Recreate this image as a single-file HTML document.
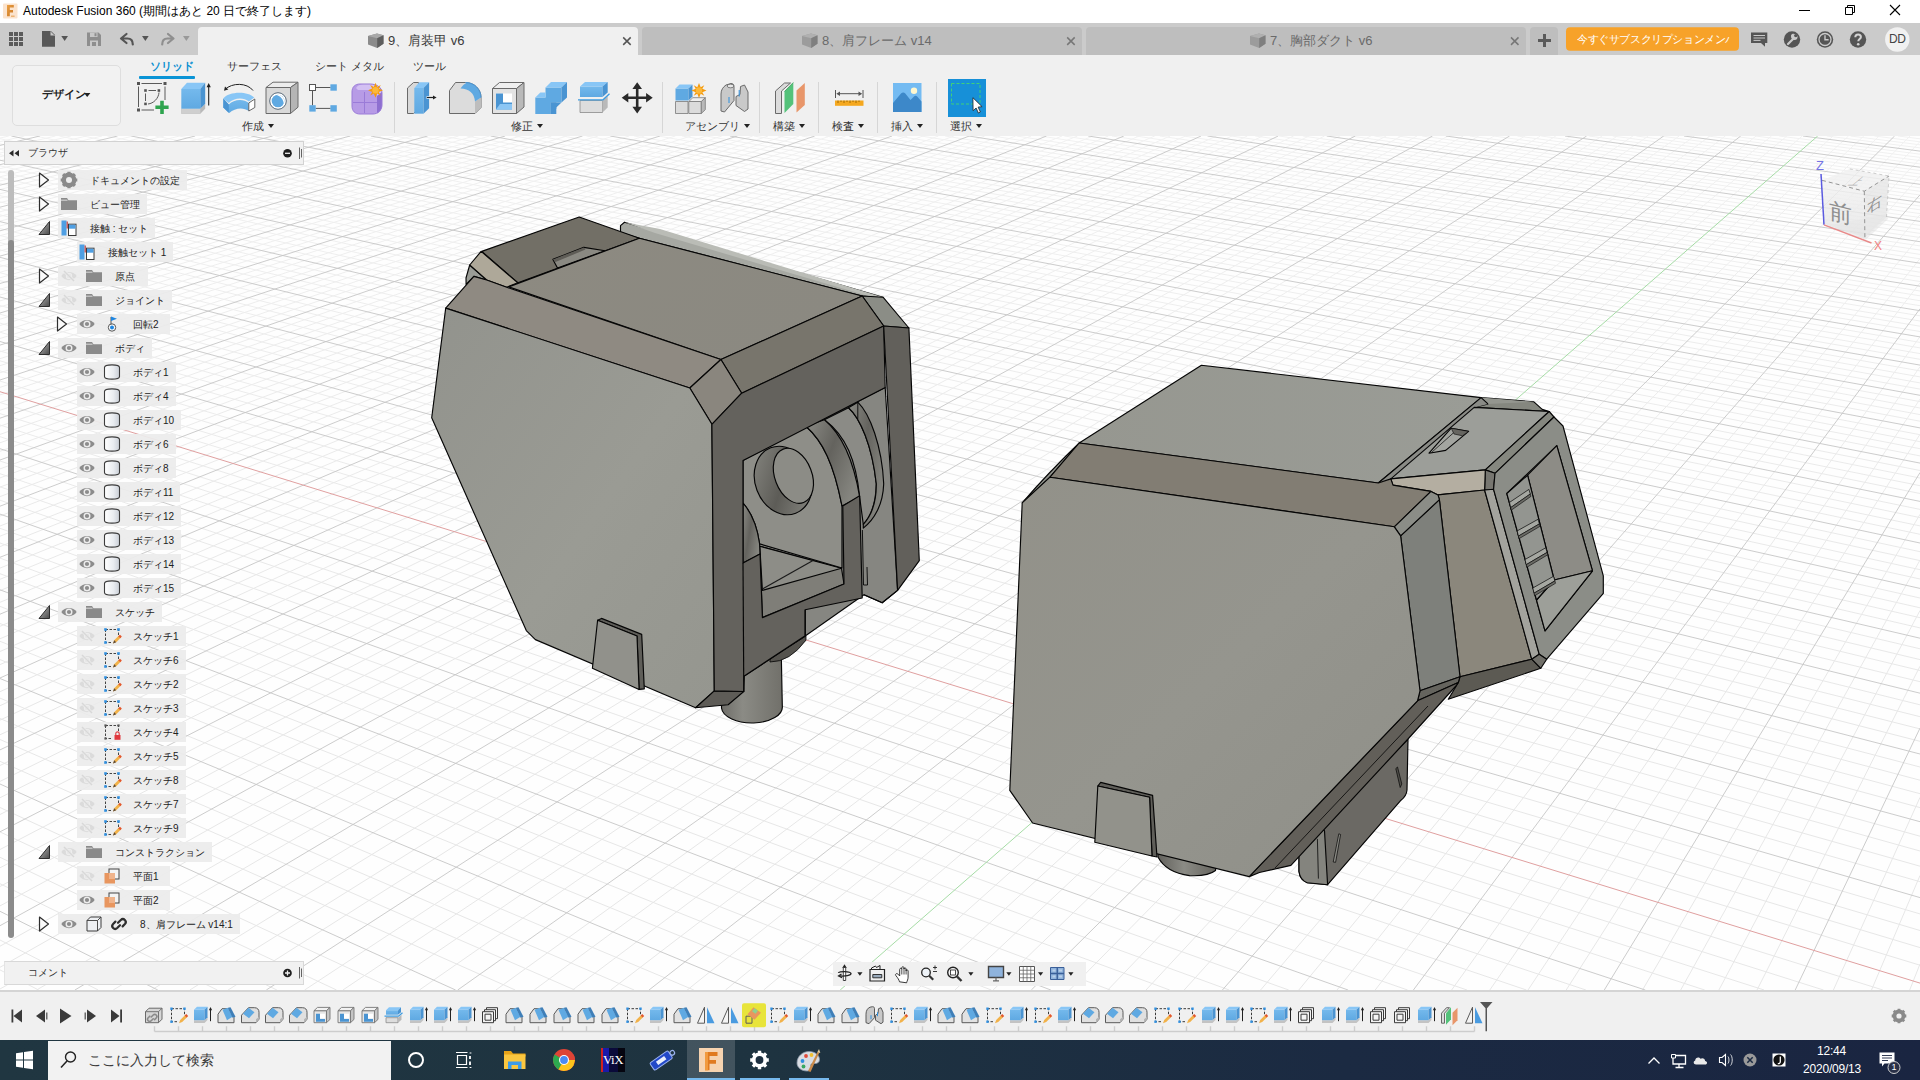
<!DOCTYPE html>
<html lang="ja"><head><meta charset="utf-8"><title>Autodesk Fusion 360</title>
<style>
*{box-sizing:border-box;margin:0;padding:0}
html,body{width:1920px;height:1080px;overflow:hidden;background:#fff;font-family:"Liberation Sans",sans-serif;color:#222}
.abs{position:absolute}
#app{position:relative;width:1920px;height:1080px;overflow:hidden}
#titlebar{left:0;top:0;width:1920px;height:23px;background:#fff}
#tabbar{left:0;top:23px;width:1920px;height:32px;background:#cbcbcb}
#toolbar{left:0;top:55px;width:1920px;height:81px;background:#f0f0f0}
#canvas{left:0;top:0;width:1920px;height:1080px}
#timeline{left:0;top:990px;width:1920px;height:50px;background:#f0f0f0;border-top:2px solid #d4d4d4}
#taskbar{left:0;top:1040px;width:1920px;height:40px;background:linear-gradient(90deg,#203641 0%,#1e3340 40%,#1b2a42 70%,#1a2541 100%)}
.t{position:absolute;white-space:nowrap;line-height:1}
</style></head><body><div id="app">
<svg id="canvas" class="abs" width="1920" height="1080" viewBox="0 0 1920 1080">
<rect x="0" y="136" width="1920" height="854" fill="#fefefe"/>
<g shape-rendering="auto"><defs><linearGradient id="gfade" x1="0" y1="136" x2="0" y2="990" gradientUnits="userSpaceOnUse"><stop offset="0" stop-color="#fff" stop-opacity=".42"/><stop offset=".2" stop-color="#fff" stop-opacity=".28"/><stop offset=".45" stop-color="#fff" stop-opacity=".1"/><stop offset=".75" stop-color="#fff" stop-opacity="0"/></linearGradient></defs><path d="M0.0 138.1L8.8 136.0M0.0 141.7L24.3 136.0M0.0 149.2L55.4 136.0M0.0 153.0L70.9 136.0M0.0 156.8L86.4 136.0M0.0 160.7L102.0 136.0M0.0 168.7L133.0 136.0M0.0 172.7L148.5 136.0M0.0 176.8L164.0 136.0M0.0 181.0L179.5 136.0M0.0 189.5L210.6 136.0M0.0 193.8L226.1 136.0M0.0 198.2L241.6 136.0M0.0 202.7L257.1 136.0M0.0 211.8L288.1 136.0M0.0 216.4L303.6 136.0M0.0 221.1L319.1 136.0M0.0 225.9L334.6 136.0M0.0 235.7L365.6 136.0M0.0 240.7L381.1 136.0M0.0 245.8L396.6 136.0M0.0 250.9L412.1 136.0M0.0 261.4L443.1 136.0M0.0 266.8L458.6 136.0M0.0 272.3L474.1 136.0M0.0 277.8L489.6 136.0M0.0 289.2L520.6 136.0M0.0 295.0L536.1 136.0M0.0 300.9L551.5 136.0M0.0 306.9L567.0 136.0M0.0 319.2L598.0 136.0M0.0 325.5L613.5 136.0M0.0 332.0L629.0 136.0M0.0 338.5L644.4 136.0M0.0 351.8L675.4 136.0M0.0 358.7L690.9 136.0M0.0 365.7L706.4 136.0M0.0 372.8L721.8 136.0M0.0 387.4L752.8 136.0M0.0 394.9L768.2 136.0M0.0 402.5L783.7 136.0M0.0 410.3L799.2 136.0M0.0 426.2L830.1 136.0M0.0 434.4L845.6 136.0M0.0 442.8L861.0 136.0M0.0 451.3L876.5 136.0M0.0 468.9L907.4 136.0M0.0 477.9L922.9 136.0M0.0 487.1L938.4 136.0M0.0 496.6L953.8 136.0M0.0 516.0L984.7 136.0M0.0 526.0L1000.2 136.0M0.0 536.2L1015.6 136.0M0.0 546.6L1031.1 136.0M0.0 568.1L1062.0 136.0M0.0 579.3L1077.4 136.0M0.0 590.6L1092.9 136.0M0.0 602.3L1108.3 136.0M0.0 626.3L1139.2 136.0M0.0 638.8L1154.7 136.0M0.0 651.5L1170.1 136.0M0.0 664.6L1185.5 136.0M0.0 691.7L1216.4 136.0M0.0 705.7L1231.9 136.0M0.0 720.1L1247.3 136.0M0.0 734.8L1262.7 136.0M0.0 765.5L1293.6 136.0M0.0 781.4L1309.0 136.0M0.0 797.7L1324.5 136.0M0.0 814.5L1339.9 136.0M0.0 849.5L1370.8 136.0M0.0 867.8L1386.2 136.0M0.0 886.5L1401.6 136.0M0.0 905.9L1417.0 136.0M0.0 946.2L1447.9 136.0M0.0 967.3L1463.3 136.0M0.0 989.0L1478.7 136.0M36.6 990.0L1494.1 136.0M113.2 990.0L1525.0 136.0M151.5 990.0L1540.4 136.0M189.8 990.0L1555.8 136.0M228.1 990.0L1571.2 136.0M304.6 990.0L1602.0 136.0M342.9 990.0L1617.4 136.0M381.2 990.0L1632.9 136.0M419.4 990.0L1648.3 136.0M495.9 990.0L1679.1 136.0M534.2 990.0L1694.5 136.0M572.5 990.0L1709.9 136.0M610.7 990.0L1725.3 136.0M687.2 990.0L1756.1 136.0M725.5 990.0L1771.5 136.0M763.7 990.0L1786.9 136.0M801.9 990.0L1802.3 136.0M878.4 990.0L1833.1 136.0M916.6 990.0L1848.5 136.0M954.9 990.0L1863.8 136.0M993.1 990.0L1879.2 136.0M1069.5 990.0L1910.0 136.0M1107.8 990.0L1920.0 141.6M1146.0 990.0L1920.0 158.3M1184.2 990.0L1920.0 176.0M1260.6 990.0L1920.0 214.7M1298.8 990.0L1920.0 235.9M1337.0 990.0L1920.0 258.6M1375.2 990.0L1920.0 282.8M1451.6 990.0L1920.0 336.6M1489.8 990.0L1920.0 366.7M1528.0 990.0L1920.0 399.1M1566.2 990.0L1920.0 434.3M1642.5 990.0L1920.0 514.3M1680.7 990.0L1920.0 560.1M1718.9 990.0L1920.0 610.5M1757.0 990.0L1920.0 666.2M1833.4 990.0L1920.0 797.4M1871.5 990.0L1920.0 875.5M1909.7 990.0L1920.0 964.0M0.0 969.9L38.6 990.0M0.0 940.0L98.2 990.0M0.0 883.7L217.3 990.0M0.0 857.3L276.9 990.0M0.0 831.9L336.5 990.0M0.0 807.5L396.0 990.0M0.0 761.3L515.2 990.0M0.0 739.5L574.7 990.0M0.0 718.5L634.2 990.0M-0.0 698.1L693.8 990.0M0.0 659.6L812.8 990.0M0.0 641.3L872.3 990.0M0.0 623.5L931.8 990.0M0.0 606.4L991.3 990.0M0.0 573.7L1110.3 990.0M0.0 558.1L1169.7 990.0M0.0 543.0L1229.2 990.0M0.0 528.3L1288.7 990.0M0.0 500.2L1407.6 990.0M0.0 486.8L1467.0 990.0M0.0 473.7L1526.4 990.0M0.0 461.0L1585.9 990.0M0.0 436.7L1704.7 990.0M0.0 425.0L1764.1 990.0M0.0 413.6L1823.5 990.0M0.0 402.5L1882.9 990.0M0.0 381.1L1920.0 965.2M0.0 370.8L1920.0 947.6M0.0 360.8L1920.0 930.5M0.0 351.0L1920.0 913.9M0.0 332.2L1920.0 881.7M0.0 323.1L1920.0 866.2M-0.0 314.2L1920.0 851.0M0.0 305.5L1920.0 836.2M0.0 288.7L1920.0 807.6M0.0 280.6L1920.0 793.7M0.0 272.7L1920.0 780.2M0.0 264.9L1920.0 767.0M0.0 249.9L1920.0 741.3M0.0 242.6L1920.0 728.9M0.0 235.5L1920.0 716.7M0.0 228.5L1920.0 704.8M0.0 214.9L1920.0 681.7M0.0 208.4L1920.0 670.5M0.0 201.9L1920.0 659.6M0.0 195.6L1920.0 648.8M0.0 183.4L1920.0 627.9M0.0 177.4L1920.0 617.7M-0.0 171.6L1920.0 607.8M0.0 165.8L1920.0 598.0M0.0 154.7L1920.0 579.0M0.0 149.3L1920.0 569.7M0.0 143.9L1920.0 560.6M0.0 138.7L1920.0 551.7M35.4 136.0L1920.0 534.3M59.4 136.0L1920.0 525.9M83.4 136.0L1920.0 517.6M107.3 136.0L1920.0 509.4M155.3 136.0L1920.0 493.5M179.3 136.0L1920.0 485.7M203.2 136.0L1920.0 478.0M227.2 136.0L1920.0 470.5M275.1 136.0L1920.0 455.9M299.1 136.0L1920.0 448.7M323.0 136.0L1920.0 441.7M347.0 136.0L1920.0 434.7M394.9 136.0L1920.0 421.2M418.8 136.0L1920.0 414.6M442.8 136.0L1920.0 408.0M466.7 136.0L1920.0 401.6M514.6 136.0L1920.0 389.1M538.5 136.0L1920.0 382.9M562.4 136.0L1920.0 376.9M586.4 136.0L1920.0 370.9M634.2 136.0L1920.0 359.3M658.1 136.0L1920.0 353.6M682.0 136.0L1920.0 347.9M705.9 136.0L1920.0 342.4M753.8 136.0L1920.0 331.5M777.7 136.0L1920.0 326.2M801.6 136.0L1920.0 321.0M825.5 136.0L1920.0 315.8M873.3 136.0L1920.0 305.7M897.1 136.0L1920.0 300.7M921.0 136.0L1920.0 295.8M944.9 136.0L1920.0 291.0M992.7 136.0L1920.0 281.5M1016.6 136.0L1920.0 276.8M1040.4 136.0L1920.0 272.2M1064.3 136.0L1920.0 267.7M1112.0 136.0L1920.0 258.8M1135.9 136.0L1920.0 254.4M1159.8 136.0L1920.0 250.1M1183.6 136.0L1920.0 245.9M1231.3 136.0L1920.0 237.5M1255.2 136.0L1920.0 233.4M1279.0 136.0L1920.0 229.4M1302.9 136.0L1920.0 225.4M1350.6 136.0L1920.0 217.5M1374.4 136.0L1920.0 213.6M1398.2 136.0L1920.0 209.8M1422.1 136.0L1920.0 206.0M1469.7 136.0L1920.0 198.6M1493.5 136.0L1920.0 195.0M1517.4 136.0L1920.0 191.3M1541.2 136.0L1920.0 187.8M1588.8 136.0L1920.0 180.8M1612.6 136.0L1920.0 177.3M1636.4 136.0L1920.0 173.9M1660.2 136.0L1920.0 170.5M1707.8 136.0L1920.0 163.9M1731.6 136.0L1920.0 160.6M1755.4 136.0L1920.0 157.4M1779.2 136.0L1920.0 154.2M1826.8 136.0L1920.0 147.9M1850.6 136.0L1920.0 144.8M1874.4 136.0L1920.0 141.8M1898.1 136.0L1920.0 138.8" stroke="#e7e7e7" stroke-width="1" fill="none"/><rect x="0" y="136" width="1920" height="854" fill="url(#gfade)"/><path d="M0.0 145.4L39.9 136.0M0.0 164.7L117.5 136.0M0.0 185.2L195.1 136.0M0.0 207.2L272.6 136.0M0.0 230.8L350.1 136.0M0.0 256.1L427.6 136.0M0.0 283.5L505.1 136.0M0.0 313.0L582.5 136.0M0.0 345.1L659.9 136.0M0.0 380.0L737.3 136.0M0.0 418.2L814.7 136.0M0.0 460.0L892.0 136.0M0.0 506.2L969.3 136.0M0.0 557.3L1046.5 136.0M0.0 614.2L1123.8 136.0M0.0 678.0L1201.0 136.0M0.0 749.9L1278.2 136.0M0.0 831.8L1355.3 136.0M0.0 925.7L1432.5 136.0M74.9 990.0L1509.6 136.0M266.3 990.0L1586.6 136.0M457.7 990.0L1663.7 136.0M649.0 990.0L1740.7 136.0M1031.3 990.0L1894.6 136.0M1222.4 990.0L1920.0 194.8M1413.4 990.0L1920.0 308.8M1604.3 990.0L1920.0 472.6M1795.2 990.0L1920.0 728.1M0.0 911.3L157.8 990.0M0.0 784.0L455.6 990.0M0.0 678.5L753.3 990.0M0.0 589.8L1050.8 990.0M0.0 514.1L1348.1 990.0M0.0 448.7L1645.3 990.0M-0.0 341.5L1920.0 897.6M0.0 297.0L1920.0 821.7M0.0 257.3L1920.0 754.0M0.0 221.6L1920.0 693.2M0.0 189.4L1920.0 638.2M0.0 160.2L1920.0 588.4M11.4 136.0L1920.0 543.0M131.3 136.0L1920.0 501.4M251.2 136.0L1920.0 463.1M370.9 136.0L1920.0 427.9M490.6 136.0L1920.0 395.3M610.3 136.0L1920.0 365.1M729.9 136.0L1920.0 336.9M849.4 136.0L1920.0 310.7M968.8 136.0L1920.0 286.2M1088.2 136.0L1920.0 263.2M1207.5 136.0L1920.0 241.7M1326.7 136.0L1920.0 221.4M1445.9 136.0L1920.0 202.3M1565.0 136.0L1920.0 184.3M1684.0 136.0L1920.0 167.2M1803.0 136.0L1920.0 151.1" stroke="#c6c6c6" stroke-width=".9" fill="none"/><path d="M0.0 391.7L1920.0 983.1" stroke="#e0a0a0" stroke-width="1" fill="none"/><path d="M840.2 990.0L1817.7 136.0" stroke="#a6dca6" stroke-width="1" fill="none"/></g>
<defs>
<linearGradient id="gFrontL" x1="0" y1="0" x2="1" y2="1"><stop offset="0" stop-color="#92938d"/><stop offset="0.55" stop-color="#9a9b94"/><stop offset="1" stop-color="#95968f"/></linearGradient>
<linearGradient id="gTopL" x1="0" y1="0" x2="1" y2="0.4"><stop offset="0" stop-color="#8d8a81"/><stop offset="1" stop-color="#8b8981"/></linearGradient>
<linearGradient id="gPin" x1="0" y1="0" x2="1" y2="0"><stop offset="0" stop-color="#62615c"/><stop offset="0.45" stop-color="#8b8b85"/><stop offset="1" stop-color="#66655f"/></linearGradient>
<linearGradient id="gPinL" x1="0" y1="0" x2="1" y2="0"><stop offset="0" stop-color="#6f6e69"/><stop offset="0.35" stop-color="#8b8b85"/><stop offset="1" stop-color="#71706a"/></linearGradient><linearGradient id="gRing" x1="0" y1="0" x2="1" y2="1"><stop offset="0" stop-color="#8a8a84"/><stop offset="0.5" stop-color="#5d5c57"/><stop offset="1" stop-color="#8c8c86"/></linearGradient>
<linearGradient id="gArch" x1="0" y1="0" x2="1" y2="0.6"><stop offset="0" stop-color="#8b8b85"/><stop offset="0.5" stop-color="#64635e"/><stop offset="1" stop-color="#85857f"/></linearGradient>
<linearGradient id="gFrontR" x1="0" y1="0" x2="1" y2="1"><stop offset="0" stop-color="#929189"/><stop offset="0.5" stop-color="#95958e"/><stop offset="1" stop-color="#8f8f88"/></linearGradient>
<linearGradient id="gTopR" x1="0" y1="0" x2="1" y2="0"><stop offset="0" stop-color="#969790"/><stop offset="1" stop-color="#9a9c96"/></linearGradient>
</defs>
<g id="modelL" stroke="#050505" stroke-width="1.15" stroke-linejoin="round">
<!-- pin -->
<path d="M721.500 650 L721.500 708 A30.400 16 0 0 0 782.300 706 L781 640 Z" fill="url(#gPinL)"/><path d="M770 662 Q790 662 806 640 L806 636 L770 658 Z" fill="#55534e" stroke-width=".8"/>
<!-- back plate -->
<path d="M620.5 232.5 L620.5 225.6 L624.5 222.2 L883 297.2 L862.2 296 L639.4 238.2 Z" fill="#a6a8a2"/>
<path d="M624.5 222.2 L660 229 L883 297.2 L870 296.6 L655 233 Z" fill="#babcb6" stroke="none"/>
<!-- interior back wall -->
<path d="M743 460.6 L885.2 387.4 L897.6 590.4 L882.2 602.8 L863.9 594.8 L805.2 636 L744.3 676 Z" fill="#868681"/>
<!-- recess -->
<path d="M579.2 217 L481.8 251.4 L517.9 282.9 L639.4 238.2 Z" fill="#726f66"/>
<!-- slot in recess -->
<path d="M552.9 259.4 L583.8 247.4 L605 250.8 L557.5 268 Z" fill="#8a8982"/>
<path d="M552.9 259.4 L583.8 247.4 L585.5 249.5 L555.5 262 Z" fill="#5e5c56" stroke="none"/>
<!-- light facet + sliver -->
<path d="M469.7 265 L486.7 280 L473.9 276.4 L466.1 284.4 L466 278 Z" fill="#9a9c96"/>
<path d="M481.1 251.4 L517.8 282.8 L506.7 287.2 L486.7 280 L469.7 265 Z" fill="#aea899"/>
<!-- top face -->
<path d="M508.7 286.9 L639.4 238.2 L862.2 296 L720.9 359.5 Z" fill="url(#gTopL)"/>
<!-- top-right small facet -->
<path d="M862.2 296 L883 297.2 L908.9 328 L883.7 326 Z" fill="#8b8d86"/>
<!-- chamfer top-right -->
<path d="M720.9 359.5 L862.2 296 L883.7 326 L741.7 393.2 Z" fill="#78756c"/>
<!-- long chamfer strip -->
<path d="M445.7 308.1 L473.9 276.4 L486.7 280 L506.7 287.2 L720.9 359.5 L689.8 388 Z" fill="#8f8a82"/>
<!-- corner chamfer -->
<path d="M689.8 388 L720.9 359.5 L741.7 393.2 L711.9 424.3 Z" fill="#8a867e"/>
<!-- front face -->
<path d="M445.7 308.1 L689.8 388 L711.9 424.3 L714.3 690.9 L695.6 707.7 L535.4 639.6 L526.3 630.6 L431.7 417.8 Z" fill="url(#gFrontL)"/>
<!-- bottom chamfer of frame -->
<path d="M714.3 690.9 L743.8 691.5 L728.1 704.7 L695.6 707.7 Z" fill="#5e5c57"/>
<!-- U floor -->
<path d="M759.8 546.3 L841.5 568.3 L844 584 L762.4 617.6 Z" fill="#7f7e78"/>
<path d="M759.8 546.3 L841.5 568.3 L762.4 590.4 Z" fill="#8d8d87"/>
<path d="M762.4 589 L813 560.6" fill="none" stroke="#1a1a1a"/>
<!-- rear disc face -->
<path d="M824.4 419.8 L848.5 407.8 C860 418 872 445 876.3 483.7 C876 502 871 516 863.3 524.4 L859.6 496.7 C856 460 846 436 824.4 419.8 Z" fill="#8b8b86"/>
<!-- crescent -->
<path d="M848.5 407.8 L857.8 402.2 C870 414 882 446 883.7 483.7 C883 505 874 520 863.3 528.1 L863.3 524.4 C871 516 876.5 502 876.3 483.7 C872 445 860 418 848.5 407.8 Z" fill="url(#gArch)"/>
<path d="M857.8 400.4 L857.8 418.9 M862.4 530 L863.5 585 L867.5 585 L867 567" fill="none" stroke-width=".9"/>
<!-- clevis plate -->
<path d="M743 460.6 L805.9 426.3 C822.6 441.1 833.7 463.3 842 505.9 L842 568 L759.6 543.9 C757 525 751 512 743 503.1 Z" fill="#8e8e88"/>
<!-- band -->
<path d="M805.9 426.3 L824.4 419.8 C841.1 433.7 853.1 457.8 859.6 496.7 L842 505.9 C833.7 463.3 822.6 441.1 805.9 426.3 Z" fill="url(#gArch)"/>
<!-- ring -->
<ellipse cx="783.2" cy="480.5" rx="28" ry="35" transform="rotate(-21 783.2 480.5)" fill="url(#gRing)"/>
<ellipse cx="793.4" cy="475.8" rx="18.5" ry="28.6" transform="rotate(-21 793.4 475.8)" fill="#8c8c86"/>
<!-- left arch curved piece -->
<path d="M743 503.1 C751 512 757 525 759.6 543.9 L760 554 L743 563 Z" fill="url(#gArch)"/>
<!-- dark frame + U bracket front -->
<path d="M711.9 424.3 L741.7 393.2 L883.7 326 L885.2 387.4 L743 460.6 L743 563 L760 554 L762.4 617.6 L844 584 L842.8 506 L859.6 495.7 L862.2 598 L805.2 609.8 L805.2 635.7 L744.3 676 L743.8 691.5 L714.3 690.9 Z" fill="#64625d"/><path d="M743 563 L743.8 691.5" fill="none"/>
<path d="M805.2 609.8 L805.2 635.7" fill="none"/>
<!-- right plate -->
<path d="M883.7 326 L908.9 328 L919.3 560.7 L897.6 590.4 Z" fill="#62605b"/>
<path d="M897.6 590.4 L882.2 602.8 L863.9 594.8" fill="none"/>
<!-- tab -->
<path d="M597.6 620.2 L601.5 618.4 L641.7 634.4 L644.3 688.9 L639.1 689.4 L637 636 Z" fill="#5f5e59"/>
<path d="M597.6 620.2 L637 636 L639.1 689.4 L592.4 668.2 Z" fill="#91918b"/>
</g>
<g id="modelR" stroke="#050505" stroke-width="1.15" stroke-linejoin="round">
<!-- lower bracket behind -->
<path d="M1408 739 L1407 790 Q1406.5 796 1401 800.2 L1327.6 884.7 L1307.2 882.7 Q1300 880 1299 871.5 L1299 850 Z" fill="#6b6964"/>
<path d="M1299 850 L1299 871.5 Q1300 880 1307.2 882.7 L1327.6 884.7 L1324.5 830.7 L1318 826 Z" fill="#84847e"/>
<path d="M1317.4 838.9 L1318.4 878.6" fill="none" stroke-width="0.8"/>
<path d="M1395.8 768.6 L1400.2 787.5 L1401.8 784 L1397.5 767 Z" fill="#504f4a" stroke-width="0.7"/>
<path d="M1338.8 833.8 L1333.2 862 L1335.6 862.3 L1340.6 834.5 Z" fill="#8a8a84" stroke-width="0.7"/>
<!-- bottom cylinder -->
<path d="M1158 852 L1216 866 L1215.500 870.500 Q1208 876.500 1189.600 875.600 Q1166 872.500 1158 857 Z" fill="url(#gPin)"/>
<!-- left sliver -->
<path d="M1079.2 443 L1050 477.2 L1022.2 502.8 Q1048.5 472.5 1079.2 443 Z" fill="#8f918b"/>
<!-- back small piece -->
<path d="M1481.1 397.6 L1533.9 401.8 L1542.2 409.4 L1549.2 411.5 L1474.2 407.4 L1488 403.9 Z" fill="#85877f"/>
<path d="M1488 403.9 L1533.9 401.8 L1481.1 397.6 Z" fill="#94968f" stroke="none"/>
<!-- top face -->
<path d="M1201.4 365.3 L1481.1 397.6 L1378.3 483 L1079.2 443 Z" fill="url(#gTopR)"/>
<!-- step side -->
<path d="M1481.1 397.6 L1488 403.9 L1474.2 407.4 L1390.8 478.9 L1378.3 483 Z" fill="#8a8b86" stroke="none"/><path d="M1378.3 483 L1481.1 397.6 L1488 403.9" fill="none"/>
<!-- lower deck -->
<path d="M1474.2 407.4 L1549.2 411.5 L1485.3 469.9 L1390.8 478.9 Z" fill="#9c9e99"/>
<!-- slot -->
<path d="M1451.2 428.2 L1468.6 431.4 L1445.7 450.4 L1429 453.2 Z" fill="#a3a5a0"/>
<path d="M1451.2 428.2 L1468.6 431.4 L1462.4 435.8 L1454 434 Z" fill="#666560" stroke-width="0.6"/>
<path d="M1453.3 433 L1431.5 452.5" fill="none" stroke-width="0.7"/>
<!-- frame chamfer -->
<path d="M1549.2 411.5 L1554 417 L1495 473.3 L1485.3 469.9 Z" fill="#85877f"/>
<!-- small dark facet -->
<path d="M1485.3 469.9 L1495 473.3 L1493.6 489.3 L1484.6 490 Z" fill="#777670"/>
<!-- beige facet -->
<path d="M1390.8 478.9 L1485.3 469.9 L1484.6 490 L1438 494.9 L1431 491.4 L1393 485.1 Z" fill="#b4aea1"/>
<!-- chamfer strip -->
<path d="M1050 477.2 L1079.2 443 L1378.3 483 L1390.8 478.9 L1393 485.1 L1431 491.4 L1394.3 526.8 Z" fill="#827d73"/>
<!-- duct side face (brownish) -->
<path d="M1438 494.9 L1484.6 490 L1531.7 659.2 L1460 676.7 L1439.4 499.7 Z" fill="#8b877c"/>
<!-- light strip -->
<path d="M1484.6 490 L1493.6 489.3 L1539.2 654.2 L1531.7 659.2 Z" fill="#a3a39d"/>
<!-- duct frame -->
<path d="M1495 473.3 L1554 417 L1563 426 L1603.3 575.8 L1603.3 593.3 L1546.7 659.2 L1539.2 654.2 L1493.6 489.3 Z" fill="#8b8d87"/>
<!-- duct interior -->
<path d="M1506.8 493.5 L1556.8 445.6 L1592.5 570.8 L1545 630.8 Z" fill="#8c8b85"/>
<path d="M1527.6 475.2 L1556.8 445.6 L1592.5 570.8 L1554.2 580 Z" fill="#8d8c86"/>
<path d="M1554.2 580 L1592.5 570.8 L1545 630.8 L1536.5 600 Z" fill="#9d9f99"/>
<path d="M1506.8 493.5 L1527.6 475.2 L1554.2 580 L1536.5 600 Z" fill="#939590"/>
<path d="M1509.5 502.4 L1528.9 489.4 L1530.3000000000002 494.0 L1510.7 507.59999999999997 Z" fill="#a6a8a2" stroke-width=".7"/><path d="M1510.7 507.59999999999997 L1530.3000000000002 494.0 L1530.9 496.4 L1511.3 510.2 Z" fill="#6b6b66" stroke-width=".6"/><path d="M1517.2 530.9 L1538 519.3 L1539.4 523.9 L1518.4 536.1 Z" fill="#a6a8a2" stroke-width=".7"/><path d="M1518.4 536.1 L1539.4 523.9 L1540 526.3 L1519.0 538.6999999999999 Z" fill="#6b6b66" stroke-width=".6"/><path d="M1525 559.5 L1545.7 547.8 L1547.1000000000001 552.4 L1526.2 564.7 Z" fill="#a6a8a2" stroke-width=".7"/><path d="M1526.2 564.7 L1547.1000000000001 552.4 L1547.7 554.8 L1526.8 567.3 Z" fill="#6b6b66" stroke-width=".6"/><path d="M1532.8 588 L1553.5 576.3 L1554.9 580.9 L1534.0 593.2 Z" fill="#a6a8a2" stroke-width=".7"/><path d="M1534.0 593.2 L1554.9 580.9 L1555.5 583.3 L1534.6 595.8 Z" fill="#6b6b66" stroke-width=".6"/>
<!-- duct underside -->
<path d="M1460 676.7 L1531.7 659.2 L1540.8 668.3 L1448.3 699.2 L1458.3 682.5 Z" fill="#5c5a53"/>
<path d="M1531.7 659.2 L1539.2 654.2 L1546.7 659.2 L1540.8 668.3 Z" fill="#706f69"/>
<!-- right side face (mid gray) -->
<path d="M1400.6 535.8 L1439.4 499.7 L1460 676.7 L1420 690.8 Z" fill="#7e807b"/>
<path d="M1420 690.8 L1460 676.7 L1458.3 682.5 L1417.5 700.8 Z" fill="#65645e"/>
<!-- front chamfer corner -->
<path d="M1394.3 526.8 L1431 491.4 L1438 494.9 L1439.4 499.7 L1400.6 535.8 Z" fill="#8b8d87"/>
<!-- underside band -->
<path d="M1417.5 700.8 L1458.3 682.5 L1455.9 686 L1408 739 L1290.9 865.4 L1259.4 872.5 L1249.2 876.6 Z" fill="#625f59"/>
<path d="M1428 706 L1275 868" fill="none" stroke-width="0.8"/>
<!-- front face -->
<path d="M1022.2 502.8 L1050 477.2 L1394.3 526.8 L1400.6 535.8 L1420 690.8 L1417.5 700.8 L1249.2 876.6 L1032.6 823 L1009.8 790.4 Z" fill="url(#gFrontR)"/>
<!-- tab -->
<path d="M1097.8 786 L1100.7 782.4 L1152.6 795.4 L1157 857 L1152 856 L1149.6 797.2 Z" fill="#5f5e59"/>
<path d="M1097.8 786 L1149.6 797.2 L1152 856 L1094.8 842.2 Z" fill="#92928b"/>
</g>

<g id="viewcube">
<defs><filter id="vcb" x="-20%" y="-20%" width="140%" height="140%"><feGaussianBlur stdDeviation="0.45"/></filter>
<linearGradient id="vcF" x1="0" y1="0" x2="0" y2="1"><stop offset="0" stop-color="#f2f2f2"/><stop offset="1" stop-color="#e4e4e4"/></linearGradient></defs>
<g filter="url(#vcb)">
<path d="M1826 226 L1866 239.500 L1888 219 L1886 214 Z" fill="#dcdcdc" opacity=".45"/>
<path d="M1822 180.300 L1864.300 191.200 L1864.900 237.500 L1824.500 224.300 Z" fill="url(#vcF)" fill-opacity=".8"/>
<path d="M1864.300 191.200 L1889 176 L1886.500 217 L1864.900 237.500 Z" fill="#e6e6e6" fill-opacity=".8"/>
<path d="M1822 180.300 L1849.800 168.900 L1889 176 L1864.300 191.200 Z" fill="#f0f0f0" fill-opacity=".8"/>
<path d="M1822 180.300 L1864.300 191.200 L1889 176 M1864.300 191.200 L1864.900 237.500" fill="none" stroke="#8a8a8a" stroke-width=".9" stroke-dasharray="4 3"/>
<path d="M1849.800 168.900 L1889 176 L1886.500 217" fill="none" stroke="#c0c0c0" stroke-width=".8" stroke-dasharray="3 3"/>
<path d="M1821 174 L1824 224.800" stroke="#5a5ae0" stroke-width="1.500" fill="none"/>
<path d="M1824 224.800 L1871.500 243" stroke="#e88a8a" stroke-width="1.400" fill="none"/>
</g>
<text x="1816" y="170" font-family="Liberation Sans, sans-serif" font-size="13" fill="#7474e4">Z</text>
<text x="1874" y="250" font-family="Liberation Sans, sans-serif" font-size="12" fill="#f08080">X</text>
<g font-family="Liberation Sans, sans-serif" fill="#8f8f8f">
<text x="1829" y="218" font-size="23" transform="skewY(14)" style="transform-origin:1829px 218px">前</text>
<text x="1867" y="214" font-size="15" transform="skewY(-32)" style="transform-origin:1867px 214px">右</text>
<text x="1848" y="185" font-size="10" fill="#b4b4b4" transform="skewX(-50)" style="transform-origin:1848px 185px">上</text>
</g>
</g>

</svg>
<div id="titlebar" class="abs"></div>
<div id="tabbar" class="abs"></div>
<div id="toolbar" class="abs"></div>
<style>
#top .t{color:#3a3a3a}
.tab{position:absolute;top:27px;height:28px;border-radius:4px 4px 0 0}
.tbl{position:absolute;font-size:11px;color:#333;white-space:nowrap;line-height:12px}
.dd{display:inline-block;width:0;height:0;border-left:3px solid transparent;border-right:3px solid transparent;border-top:4px solid #222;vertical-align:2px;margin-left:1px}
.sep{position:absolute;top:82px;width:1px;height:51px;background:#d6d6d6}
.ic{position:absolute;overflow:visible}
</style>
<div id="top">
<!-- title bar -->
<svg class="ic" style="left:0;top:0" width="22" height="22" viewBox="0 0 22 22"><defs><linearGradient id="fIc" x1="0" y1="0" x2="1" y2="1"><stop offset="0" stop-color="#eaa045"/><stop offset="1" stop-color="#c8741f"/></linearGradient></defs><rect x="3" y="3.500" width="14.500" height="15" rx="1" fill="#fbe3cd"/><path d="M7 5h6.800v2.600H9.800v2.300h3.200v2.500H9.800v3.800H7z" fill="url(#fIc)"/><path d="M11 16.200h3.600" stroke="#e9a860" stroke-width="1.200"/></svg>
<div class="t" style="left:23px;top:5px;font-size:12px;color:#000">Autodesk Fusion 360 (期間はあと 20 日で終了します)</div>
<svg class="ic" style="left:1790px;top:0" width="130" height="23" viewBox="0 0 130 23"><path d="M9 10.5h11" stroke="#000" stroke-width="1"/><path d="M55.5 7.5h7v7h-7z M57.5 7.5v-2h7v7h-2" fill="none" stroke="#000" stroke-width="1"/><path d="M100 5l10 10M110 5l-10 10" stroke="#000" stroke-width="1.1"/></svg>
<!-- quick access icons -->
<svg class="ic" style="left:0;top:23px" width="200" height="32" viewBox="0 23 200 32">
<g fill="#5b5b5b"><rect x="9" y="32" width="4" height="4"/><rect x="14" y="32" width="4" height="4"/><rect x="19" y="32" width="4" height="4"/><rect x="9" y="37" width="4" height="4"/><rect x="14" y="37" width="4" height="4"/><rect x="19" y="37" width="4" height="4"/><rect x="9" y="42" width="4" height="4"/><rect x="14" y="42" width="4" height="4"/><rect x="19" y="42" width="4" height="4"/></g>
<path d="M42 31h8.5l4.5 4.5v11.200h-13z" fill="#585858"/><path d="M50.500 31v4.500h4.500z" fill="#c9c9c9"/><path d="M50.9 31.300l3.800 3.800" stroke="#585858" stroke-width=".8"/>
<path d="M61.300 36h6.700l-3.350 5z" fill="#555"/>
<path d="M87 32.500h11.500l2.500 2.500v11h-14z" fill="#8e8e8e"/><rect x="90" y="32.500" width="7.500" height="4.500" fill="#c8c8c8"/><rect x="94.500" y="33.200" width="2" height="3" fill="#8e8e8e"/><rect x="90" y="40.500" width="8" height="5.500" fill="#c8c8c8"/><rect x="92" y="42" width="4" height="4" fill="#8e8e8e"/>
<path d="M126.500 34l-5.500 4.500 5.500 4.500M121.500 38.500h6c3.500 0 5.300 2.500 5.300 6" fill="none" stroke="#555" stroke-width="2.200" stroke-linecap="round" stroke-linejoin="round"/>
<path d="M142 36h6.700l-3.350 5z" fill="#555"/>
<path d="M168 34l5.500 4.500-5.500 4.500M173 38.500h-5.500c-3.500 0-5.300 2.500-5.300 6" fill="none" stroke="#8f8f8f" stroke-width="2.200" stroke-linecap="round" stroke-linejoin="round"/>
<path d="M183 36h6.700l-3.350 5z" fill="#999"/>
</svg>
<!-- tabs -->
<div class="tab" style="left:198px;width:440px;background:#f0f0f0;height:29px"></div>
<div class="tab" style="left:642px;width:440px;background:#bebebe"></div>
<div class="tab" style="left:1086px;width:440px;background:#bebebe"></div>
<div class="tab" style="left:1530px;width:28px;background:#bebebe"></div>
<svg class="ic" style="left:0;top:23px" width="1920" height="32" viewBox="0 23 1920 32">
<defs><g id="cube"><path d="M0 2.500l9-2.500 6.500 1.800v8.500l-6.300 4.200-9.200-3.500z" fill="#8b8b8b"/><path d="M0 2.500l9-2.500 6.500 1.800-6.300 3z" fill="#a9a9a9"/><path d="M9.200 4.800l6.300-3v8.500l-6.300 4.200z" fill="#5e5e5e"/></g>
<g id="xx"><path d="M0 0l7.500 7.500M7.500 0l-7.500 7.500" stroke-width="1.500" fill="none"/></g></defs>
<use href="#cube" x="368" y="33.500"/><use href="#xx" x="623.200" y="37.400" stroke="#555"/>
<use href="#cube" x="802" y="33.500" opacity=".65"/><use href="#xx" x="1067.200" y="37.400" stroke="#777"/>
<use href="#cube" x="1250" y="33.500" opacity=".65"/><use href="#xx" x="1511" y="37.400" stroke="#777"/>
<path d="M1538 40.500h13M1544.500 34v13" stroke="#5a5a5a" stroke-width="3"/>
<rect x="1566" y="27.200" width="173" height="23.500" rx="4" fill="#f7a229"/>
<path d="M1751 32.500h16.300v10.500h-2.300v3.800l-4-3.800h-10z" fill="#555"/><path d="M1753.500 35.500h11.500M1753.500 38h11.500M1753.500 40.400h7" stroke="#c9c9c9" stroke-width="1"/>
<circle cx="1792" cy="39.500" r="8.200" fill="#555"/><path d="M1788 44l4.800-4.800" stroke="#cbcbcb" stroke-width="2.200" stroke-linecap="round"/><path d="M1796.800 35.200a3 3 0 1 1-3.300-1.700l.2 2.400 1.800.6z" fill="#cbcbcb"/><circle cx="1794.500" cy="37" r="3" fill="#cbcbcb"/><circle cx="1795.800" cy="35.600" r="1.700" fill="#555"/>
<circle cx="1825" cy="39.500" r="8.200" fill="#555"/><circle cx="1825" cy="39.500" r="6" fill="none" stroke="#cbcbcb" stroke-width="1.300"/><path d="M1825 35.200v4.600h3.600" fill="none" stroke="#cbcbcb" stroke-width="1.400"/>
<circle cx="1858" cy="39.500" r="8.200" fill="#555"/><path d="M1855.300 37.300c0-1.800 1.200-2.800 2.800-2.800 1.700 0 2.800 1 2.800 2.500 0 2-2.600 2.200-2.600 4.300" fill="none" stroke="#d4d4d4" stroke-width="2"/><circle cx="1858.200" cy="44.300" r="1.300" fill="#d4d4d4"/>
<circle cx="1897.300" cy="39.500" r="12.200" fill="#f1f1f1"/>
</svg>
<div class="t" style="left:388px;top:34px;font-size:13px;color:#3a3a3a">9、肩装甲 v6</div>
<div class="t" style="left:822px;top:34px;font-size:13px;color:#6a6a6a">8、肩フレーム v14</div>
<div class="t" style="left:1270px;top:34px;font-size:13px;color:#6a6a6a">7、胸部ダクト v6</div>
<div class="t" style="left:1577px;top:33px;font-size:11px;color:#fff;letter-spacing:-0.4px;width:153px;overflow:hidden;line-height:13px;height:13px">今すぐサブスクリプションメンバーに…</div>
<div class="t" style="left:1889px;top:33px;font-size:12px;color:#444;letter-spacing:-0.3px">DD</div>
<!-- toolbar -->
<div class="abs" style="left:12px;top:65px;width:109px;height:61px;border:1px solid #dedede;border-radius:5px;background:#f2f2f2"></div>
<div class="t" style="left:42px;top:89px;font-size:11px;font-weight:bold;color:#222">デザイン</div>
<svg class="ic" style="left:84px;top:93px" width="8" height="5" viewBox="0 0 8 5"><path d="M0 0h6.400l-3.200 4z" fill="#222"/></svg>
<div class="t" style="left:150px;top:61px;font-size:11px;font-weight:bold;color:#0a8fd0">ソリッド</div>
<div class="abs" style="left:138.500px;top:76px;width:56px;height:3px;background:#0a94d6;border-radius:1px"></div>
<div class="t" style="left:227px;top:61px;font-size:11px;color:#333">サーフェス</div>
<div class="t" style="left:315px;top:61px;font-size:11px;color:#333">シート メタル</div>
<div class="t" style="left:413px;top:61px;font-size:11px;color:#333">ツール</div>
<div class="sep" style="left:394px"></div><div class="sep" style="left:662px"></div><div class="sep" style="left:759px"></div><div class="sep" style="left:818px"></div><div class="sep" style="left:877px"></div><div class="sep" style="left:936px"></div>
<div class="tbl" style="left:242px;top:120px">作成 <i class="dd"></i></div>
<div class="tbl" style="left:511px;top:120px">修正 <i class="dd"></i></div>
<div class="tbl" style="left:685px;top:120px">アセンブリ <i class="dd"></i></div>
<div class="tbl" style="left:773px;top:120px">構築 <i class="dd"></i></div>
<div class="tbl" style="left:832px;top:120px">検査 <i class="dd"></i></div>
<div class="tbl" style="left:891px;top:120px">挿入 <i class="dd"></i></div>
<div class="tbl" style="left:950px;top:120px">選択 <i class="dd"></i></div>
<svg class="ic" style="left:0;top:76px" width="1000" height="60" viewBox="0 76 1000 60">
<defs>
<linearGradient id="bF" x1="0" y1="0" x2="0" y2="1"><stop offset="0" stop-color="#74b9ec"/><stop offset="1" stop-color="#5fa9e2"/></linearGradient>
<g id="star"><path d="M0 -7.500L1.700 -3.300L5.300 -5.300L3.300 -1.700L7.500 0L3.300 1.700L5.300 5.300L1.700 3.300L0 7.500L-1.700 3.300L-5.300 5.300L-3.300 1.700L-7.500 0L-3.300 -1.700L-5.300 -5.300L-1.700 -3.300Z" fill="#f59b0d"/><circle r="3.200" fill="#fbb83a"/></g>
</defs>
<!-- 1 create sketch -->
<g stroke="#5a5a5a" stroke-width="1" fill="none"><path d="M141.500 83.500H162M138.500 86.500V107M165 86.500V100M141.500 110H154"/><path d="M148.500 90.500H156M145.500 93.500V101M159 92.500C158.500 98.500 153.500 103.500 148 104"/></g>
<g fill="#555"><rect x="137" y="82" width="3" height="3"/><rect x="163.500" y="82" width="3" height="3"/><rect x="137" y="108.500" width="3" height="3"/><rect x="144.200" y="89.200" width="2.600" height="2.600"/><rect x="157.600" y="89.200" width="2.600" height="2.600"/><rect x="144.200" y="102.600" width="2.600" height="2.600"/></g>
<path d="M160.200 100.700h3.600v4.800h4.800v3.600h-4.800v4.800h-3.600v-4.800h-4.800v-3.600h4.800z" fill="#2ea44e"/>
<!-- 2 extrude -->
<path d="M181.300 108.700h19l4.900-4.900v5l-4.900 4.900h-19z" fill="#b9b9b9"/><path d="M181.300 108.700h19v5h-19z" fill="#cfcfcf"/>
<path d="M181.300 89h19v19.700h-19z" fill="url(#bF)"/><path d="M181.300 89l5.700-6.300h18.200l-4.900 6.300z" fill="#88c6f6"/><path d="M200.300 89l4.900-6.300v21.100l-4.900 4.900z" fill="#4a94d2"/>
<path d="M208.700 105.500V85" stroke="#222" stroke-width="1.100"/><path d="M206.600 87.200l2.100-4.200 2.100 4.200z" fill="#222"/>
<!-- 3 revolve -->
<path d="M223.300 98.500c5-7 24-8 31 -1l-5.500 4c-5-4.500-15-4-20 1.500z" fill="#88c6f6"/><path d="M223.300 98.500l5.500 6c5-5.500 15-6 20-1.500l0 8c-5-4-14-3.500-19.500 2l-6-5.500z" fill="url(#bF)"/><path d="M223.300 98.500l5.500 6v8.500l-5.500-5.500z" fill="#4a94d2"/>
<path d="M248.800 103l6-4v8.500l-6 3.500z" fill="#fff" stroke="#555" stroke-width=".9"/>
<path d="M225 89.500c7-7 22-7 28 1" fill="none" stroke="#222" stroke-width="1"/><path d="M224 90.800l1-4.200 3.300 2.800z" fill="#222"/>
<!-- 4 hole -->
<path d="M266 87.500h24.500v26h-24.500z" fill="#d9d9d9" stroke="#6a6a6a" stroke-width="1"/><path d="M266 87.500l7-5.300h25l-7.500 5.300z" fill="#ececec" stroke="#6a6a6a" stroke-width="1"/><path d="M290.500 87.500l7.500-5.300v25l-7.500 6.300z" fill="#b5b5b5" stroke="#6a6a6a" stroke-width="1"/>
<circle cx="278" cy="101" r="8.300" fill="#fff" stroke="#5a6a7a" stroke-width="1"/><circle cx="278" cy="101" r="6.300" fill="#5fa9e2"/><path d="M276.500 95c4 1 7 4.500 7.200 8.500a6.300 6.300 0 0 0-7.200-8.500z" fill="#fff"/>
<!-- 5 pattern -->
<path d="M312.500 90.500v15M315.600 87.500h15M315.600 108.400h15" stroke="#555" stroke-width="1"/>
<rect x="309.500" y="84.500" width="6" height="6" fill="#fff" stroke="#555" stroke-width="1"/><rect x="330.400" y="84.300" width="6.400" height="6.400" fill="#5fa9e2"/><rect x="309.300" y="105.200" width="6.400" height="6.400" fill="#5fa9e2"/><rect x="330.400" y="105.200" width="6.400" height="6.400" fill="#5fa9e2"/>
<!-- 6 form -->
<path d="M352 92c0-5 3-8 8-8h10c6 0 12 3 12 9v12c0 5-4 9-9 9h-13c-5 0-8-3-8-8z" fill="#b79be6"/><path d="M356 88c2-3 5-4 8-4h8c5 0 10 3 10 8l-5 4c0-4-2-6-6-6h-13z" fill="#d3c0f3"/><path d="M377 96l5-4v13c0 4-2 7-5 8.500z" fill="#8e6fd0"/><path d="M364.500 92v21M353 102.500h24" stroke="#9a7bd8" stroke-width="1"/><path d="M352 92c0-5 3-8 8-8h10c6 0 12 3 12 9v12c0 5-4 9-9 9h-13c-5 0-8-3-8-8z" fill="none" stroke="#9a7bd8" stroke-width="1"/>
<use href="#star" x="375.500" y="90.200"/>
<!-- 7 press pull -->
<path d="M407.500 88l6-5.500h5v26l-5 5h-6z" fill="#d9d9d9" stroke="#6a6a6a" stroke-width="1"/>
<path d="M414.300 88h9.200v25.700h-9.200z" fill="url(#bF)"/><path d="M414.300 88l5-5.700h9.800l-5.600 5.700z" fill="#88c6f6"/><path d="M423.500 88l5.600-5.700v26l-5.600 5.400z" fill="#4a94d2"/>
<path d="M426.500 97.500h8" stroke="#222" stroke-width="1.100"/><path d="M433 95.400l3.600 2.100-3.600 2.100z" fill="#222"/><path d="M426.500 96.300h3v2.400h-3z" fill="#fff"/><path d="M427 97.500h7" stroke="#222" stroke-width="1.100"/>
<!-- 8 fillet -->
<path d="M449.500 90.500l6-8h10c9 0 15.500 7 15.500 15v10l-6 6h-25.500z" fill="#dcdcdc" stroke="#6a6a6a" stroke-width="1"/><path d="M475 101.500l6-4v10l-6 6z" fill="#bdbdbd"/>
<path d="M460.500 88.500c2-3 4-5 7-6 8 1 13 7 13.500 15l-6 4c-.5-8-6-13-14.500-13z" fill="#5fa9e2"/><path d="M465.500 82.500c9 0 15.500 7 15.500 15" fill="none" stroke="#4a94d2" stroke-width="1"/>
<!-- 9 shell -->
<path d="M492.500 88.500h24v25h-24z" fill="#e3e3e3" stroke="#6a6a6a" stroke-width="1"/><path d="M492.500 88.500l7-6h24.500l-7.500 6z" fill="#efefef" stroke="#6a6a6a" stroke-width="1"/><path d="M516.500 88.500l7.500-6v24.500l-7.500 6.500z" fill="#b9b9b9" stroke="#6a6a6a" stroke-width="1"/>
<rect x="496" y="93.500" width="16" height="16" fill="#fff"/><path d="M496 93.500h7v9h9v7h-16z" fill="#4a94d2"/><path d="M496 109.500l4-5.500h12v5.500z" fill="#8cc6f4"/>
<!-- 10 combine -->
<path d="M535.300 97.500h15.500v16.500h-15.500z M545.500 87.500h16v15h-16z" fill="#5fa9e2"/><path d="M535.300 97.500l5.300-5.500h6l5-5 .5-5h15.500l-5.600 5.500h-16l-5.200 5.500z" fill="#8cc6f4" opacity="0"/><path d="M545.500 87.500l5.500-5.400h16l-5.500 5.400z" fill="#88c6f6"/><path d="M561.500 87.500l5.500-5.400v15.400l-5.500 5z" fill="#4a94d2"/><path d="M535.300 97.500l5-5h5.200v5z" fill="#88c6f6"/><path d="M550.800 102.500h10.700l-5.200 5v6.500l-5.500 0z" fill="#4a94d2"/><path d="M550.800 102.500v11.500l5.500-5.500v-6z" fill="#4a94d2"/>
<!-- 11 offset face -->
<path d="M580 100.500h22.500v12h-22.500z" fill="#dddddd" stroke="#8a8a8a" stroke-width=".8"/><path d="M602.500 100.500l5.200-4.500v11.500l-5.200 5z" fill="#b9b9b9"/>
<path d="M580 86.500h22.500v10.500h-22.500z" fill="url(#bF)"/><path d="M580 86.500l5-4.400h22.700l-5.200 4.400z" fill="#88c6f6"/><path d="M602.500 86.500l5.200-4.400v10.400l-5.200 4.500z" fill="#4a94d2"/>
<path d="M578 99.800h25l6.500-6" fill="none" stroke="#3d9be0" stroke-width="1.300"/>
<!-- 12 move -->
<path d="M637.200 85.500v24.600M625 97.800h24.500" stroke="#2a2a2a" stroke-width="2.600"/><path d="M637.200 82.300l4.800 6.600h-9.600zM637.200 113.400l4.800-6.600h-9.600zM621.700 97.800l6.600-4.800v9.600zM652.700 97.800l-6.600-4.800v9.600z" fill="#2a2a2a"/>
<!-- 13 new component -->
<path d="M675.500 88.500h13v12h-13z" fill="#5fa9e2"/><path d="M675.500 88.500l4-4h13l-4 4z" fill="#88c6f6"/><path d="M688.500 88.500l4-4v12l-4 4z" fill="#4a94d2"/>
<path d="M675.500 101.500h12.500v12h-12.500z M688.800 101.500h12.500v12h-12.500z" fill="#dcdcdc" stroke="#7a7a7a" stroke-width=".8"/><path d="M688.800 101.500l4-3.800h12.500l-4 3.800z" fill="#efefef" stroke="#7a7a7a" stroke-width=".8"/><path d="M701.300 101.500l4-3.800v12l-4 3.800z" fill="#b9b9b9" stroke="#7a7a7a" stroke-width=".8"/>
<use href="#star" x="699" y="90.500"/>
<!-- 14 joint -->
<path d="M721 94c0-4 2-7 5-9l5-1.500c2 0 3 1 3 3v14l-9.500 11.500-3.500-1z" fill="#c9c9c9" stroke="#6a6a6a" stroke-width="1"/><ellipse cx="730.500" cy="86" rx="3.300" ry="1.800" fill="#e8e8e8" stroke="#6a6a6a" stroke-width=".8"/>
<path d="M736 96.500l4-2 .5-8 4-1.500 3.500 7v17l-3.500 2.500-8.500-6z" fill="#c9c9c9" stroke="#6a6a6a" stroke-width="1"/>
<path d="M729 97v6M739.200 90v6.500" stroke="#2d8fdd" stroke-width="1"/>
<!-- 15 construct -->
<path d="M775.500 91l9-8h6l-9 8v22.500h-6z" fill="#dcdcdc" stroke="#6a6a6a" stroke-width="1"/><path d="M784.500 91.500l8.800-9v21.500l-8.800 9z" fill="#54c27a"/><path d="M784.500 91.500l8.800-9" stroke="#3b9d5d" stroke-width=".8"/>
<path d="M796.500 90.500l8.300-7.500v22l-8.300 7.500z" fill="#e8966a"/>
<!-- 16 inspect -->
<rect x="835" y="100.500" width="28.500" height="5.300" fill="#f5a81f"/><path d="M838 100.500v2.500M841 100.500v1.500M844 100.500v2.500M847 100.500v1.500M850 100.500v2.500M853 100.500v1.500M856 100.500v2.500M859 100.500v1.500" stroke="#8a5a00" stroke-width=".8"/>
<path d="M835.500 90v8M863 90v8M838 93.700h22.500" stroke="#555" stroke-width="1"/><path d="M836.300 93.700l3.700-2.200v4.400zM862.200 93.700l-3.700-2.200v4.400z" fill="#555"/>
<!-- 17 insert -->
<rect x="893" y="83" width="28.500" height="29" fill="#74bbf2"/><path d="M893 112v-9l8-9.500c1.500-1.500 3-1.500 4.300 0l5.200 6.500 3.500-3.500c1-1 2.200-1 3.200 0l4.300 5v10.500z" fill="#3d88c9"/><circle cx="914" cy="90.800" r="3.200" fill="#fff7cf"/>
<!-- 18 select -->
<rect x="948" y="79" width="38" height="38" fill="#1790d8"/><rect x="951.500" y="83.500" width="28.500" height="20.500" fill="none" stroke="#3fd07a" stroke-width="1" stroke-dasharray="3 2"/>
<path d="M972.900 97.700l.2 13 3-2.700 2.300 5 2-1-2.300-4.900 4-.4z" fill="#fff" stroke="#222" stroke-width=".8" stroke-linejoin="round"/>
</svg>

</div>

<style>.bt{position:absolute;font-size:10px;color:#222;white-space:nowrap;line-height:12px}.brow{position:absolute;height:20px;line-height:21px;font-size:10px;color:#222;white-space:nowrap;padding-right:7px;background:rgba(236,236,236,.93)}</style>
<div id="browser">
<div class="abs" style="left:4px;top:141px;width:300px;height:24px;background:#f1f1f1;border:1px solid #d2d2d2"></div>
<div class="abs" style="left:4px;top:961px;width:300px;height:24px;background:#f1f1f1;border:1px solid #d8d8d8;border-left-color:#e4e4e4"></div>
<div class="brow" style="left:58px;top:170px;min-width:117px;padding-left:32px">ドキュメントの設定</div>
<div class="brow" style="left:58px;top:194px;min-width:89px;padding-left:32px">ビュー管理</div>
<div class="brow" style="left:58px;top:218px;min-width:93px;padding-left:32px">接触 : セット</div>
<div class="brow" style="left:77px;top:242px;min-width:92px;padding-left:31px">接触セット 1</div>
<div class="brow" style="left:58px;top:266px;min-width:90px;padding-left:57px">原点</div>
<div class="brow" style="left:58px;top:290px;min-width:106px;padding-left:57px">ジョイント</div>
<div class="brow" style="left:77px;top:314px;min-width:93px;padding-left:56px">回転2</div>
<div class="brow" style="left:58px;top:338px;min-width:90px;padding-left:57px">ボディ</div>
<div class="brow" style="left:77px;top:362px;min-width:93px;padding-left:56px">ボディ1</div>
<div class="brow" style="left:77px;top:386px;min-width:93px;padding-left:56px">ボディ4</div>
<div class="brow" style="left:77px;top:410px;min-width:101px;padding-left:56px">ボディ10</div>
<div class="brow" style="left:77px;top:434px;min-width:93px;padding-left:56px">ボディ6</div>
<div class="brow" style="left:77px;top:458px;min-width:93px;padding-left:56px">ボディ8</div>
<div class="brow" style="left:77px;top:482px;min-width:101px;padding-left:56px">ボディ11</div>
<div class="brow" style="left:77px;top:506px;min-width:101px;padding-left:56px">ボディ12</div>
<div class="brow" style="left:77px;top:530px;min-width:101px;padding-left:56px">ボディ13</div>
<div class="brow" style="left:77px;top:554px;min-width:101px;padding-left:56px">ボディ14</div>
<div class="brow" style="left:77px;top:578px;min-width:101px;padding-left:56px">ボディ15</div>
<div class="brow" style="left:58px;top:602px;min-width:98px;padding-left:57px">スケッチ</div>
<div class="brow" style="left:77px;top:626px;min-width:101px;padding-left:56px">スケッチ1</div>
<div class="brow" style="left:77px;top:650px;min-width:101px;padding-left:56px">スケッチ6</div>
<div class="brow" style="left:77px;top:674px;min-width:101px;padding-left:56px">スケッチ2</div>
<div class="brow" style="left:77px;top:698px;min-width:101px;padding-left:56px">スケッチ3</div>
<div class="brow" style="left:77px;top:722px;min-width:101px;padding-left:56px">スケッチ4</div>
<div class="brow" style="left:77px;top:746px;min-width:101px;padding-left:56px">スケッチ5</div>
<div class="brow" style="left:77px;top:770px;min-width:101px;padding-left:56px">スケッチ8</div>
<div class="brow" style="left:77px;top:794px;min-width:101px;padding-left:56px">スケッチ7</div>
<div class="brow" style="left:77px;top:818px;min-width:101px;padding-left:56px">スケッチ9</div>
<div class="brow" style="left:58px;top:842px;min-width:139px;padding-left:57px">コンストラクション</div>
<div class="brow" style="left:77px;top:866px;min-width:93px;padding-left:56px">平面1</div>
<div class="brow" style="left:77px;top:890px;min-width:93px;padding-left:56px">平面2</div>
<div class="brow" style="left:58px;top:914px;min-width:179px;padding-left:82px">8、肩フレーム v14:1</div>
<div class="abs" style="left:8px;top:170px;width:6px;height:72px;background:#bcbcbc;border-radius:3px 3px 0 0"></div>
<div class="abs" style="left:8px;top:240px;width:6px;height:698px;background:#8b8b8b;border-radius:3px"></div>
<svg class="abs" style="left:0;top:136px;overflow:visible" width="320" height="860" viewBox="0 136 320 860"><defs>
<linearGradient id="gTri" x1="0" y1="0" x2="1" y2="1"><stop offset="0" stop-color="#bdbdbd"/><stop offset="1" stop-color="#4a4a4a"/></linearGradient>
<linearGradient id="gBody" x1="0" y1="0" x2="1" y2="0"><stop offset="0" stop-color="#ffffff"/><stop offset="0.6" stop-color="#e9ecf0"/><stop offset="1" stop-color="#c9ced6"/></linearGradient>
<g id="iArrC"><path d="M-4.500 -7L4.500 0L-4.500 7Z" fill="#fafafa" stroke="#2e2e2e" stroke-width="1.200" stroke-linejoin="round"/></g>
<g id="iArrO"><path d="M5.500 -6.500V6.500H-5Z" fill="url(#gTri)" stroke="#2e2e2e" stroke-width="1" stroke-linejoin="round"/></g>
<g id="iEye"><path d="M-7.700 0C-4.500 -5.500 4.500 -5.500 7.700 0C4.500 5.500 -4.500 5.500 -7.700 0Z" fill="#8c8c8c"/><circle r="3.500" fill="#ededed"/><circle r="2.100" fill="#8c8c8c"/></g>
<g id="iEyeH" opacity="0.9"><path d="M-7.700 0C-4.500 -5.500 4.500 -5.500 7.700 0C4.500 5.500 -4.500 5.500 -7.700 0Z" fill="#dadada"/><circle r="3.200" fill="#ededed"/><circle r="1.900" fill="#dadada"/><path d="M-5.500 -5.500L5.500 5.500" stroke="#ededed" stroke-width="3"/><path d="M-5 -5L5 5" stroke="#d6d6d6" stroke-width="1.400"/></g>
<g id="iFolder"><path d="M-8 -6h6l1.500 2.200H8V6H-8Z" fill="#8a8a8a"/><path d="M-8 -3.800h6.500" stroke="#ededed" stroke-width=".8"/></g>
<g id="iGear"><circle r="5.600" fill="none" stroke="#8a8a8a" stroke-width="3.600"/><g stroke="#8a8a8a" stroke-width="3.200"><path d="M0 -8.300V8.300M-8.300 0H8.300M-5.900 -5.900L5.900 5.900M-5.900 5.900L5.900 -5.900"/></g><circle r="3" fill="#ededed"/></g>
<g id="iBody"><path d="M-7.500 -4.500c0-3.500 15-3.500 15 0v9c0 3.500-15 3.500-15 0z" fill="url(#gBody)" stroke="#3c3c3c" stroke-width="1.100"/></g>
<g id="iSketch"><path d="M-6.500 -6.500H6.500V1M-6.500 -6.500V6.500H0" fill="none" stroke="#444" stroke-width="1" stroke-dasharray="2.500 1.500"/><g fill="#2f8fe0"><rect x="-7.800" y="-7.800" width="2.600" height="2.600"/><rect x="5.200" y="-7.800" width="2.600" height="2.600"/><rect x="-7.800" y="5.200" width="2.600" height="2.600"/></g><path d="M1 7.500l1.200-3.200 5-5 2 2-5 5z" fill="#f2b24a"/><path d="M6.300 .2l1.700-1.400 1.800 1.800-1.500 1.600z" fill="#e4572e"/><path d="M1 7.500l1.200-3.200 2 2z" fill="#5a4a3a"/></g>
<g id="iSketchL"><path d="M-6.500 -6.500H6.500V0M-6.500 -6.500V6.500H0" fill="none" stroke="#444" stroke-width="1" stroke-dasharray="2.500 1.500"/><g fill="#555"><rect x="-7.600" y="-7.600" width="2.200" height="2.200"/><rect x="5.400" y="-7.600" width="2.200" height="2.200"/><rect x="-7.600" y="5.400" width="2.200" height="2.200"/></g><rect x="2.500" y="3" width="6" height="4.800" fill="#e0383e"/><path d="M3.800 3V1.600a1.700 1.700 0 0 1 3.400 0V3" fill="none" stroke="#e0383e" stroke-width="1.100"/></g>
<g id="iPlane"><rect x="-3" y="-7" width="10" height="10" fill="#f4f4f4" stroke="#444" stroke-width="1"/><rect x="-7.500" y="-3" width="10.500" height="10.500" fill="#e8965f"/><rect x="-3" y="-3" width="6" height="6" fill="#f0b48c"/></g>
<g id="iJoint"><circle cy="3.500" r="3.700" fill="#fff" stroke="#555" stroke-width="1"/><circle cy="3.500" r="2" fill="#1f86e0"/><path d="M-1 .5V-7" stroke="#555" stroke-width="1"/><path d="M-1 -7.500l6 2.300-6 2.200z" fill="#1f86e0"/></g>
<g id="iContact"><rect x="-7.500" y="-7.500" width="5" height="15" fill="#4f9fe3"/><rect x="-.5" y="-3.800" width="7.500" height="11.300" fill="#fff" stroke="#3a3a3a" stroke-width="1"/><rect x="0" y="-3.300" width="6.500" height="4" fill="#4f9fe3"/><path d="M-1.800 -6.500v7" stroke="#c03030" stroke-width="1.100"/></g>
<g id="iComp"><path d="M-7 -3.500l3.500-3.500h10.500v10.500l-3.500 3.500h-10.500z" fill="#eef0f3" stroke="#3c3c3c" stroke-width="1"/><path d="M-7 -3.500h10.500v10.500M3.500 -3.500l3.500-3.500" fill="none" stroke="#3c3c3c" stroke-width=".9"/></g>
<g id="iLink"><g fill="none" stroke="#2e2e2e" stroke-width="2.200" stroke-linecap="round"><path d="M-1 -1.200l2.800-2.800a2.900 2.900 0 0 1 4.100 4.100l-2.300 2.300"/><path d="M1 1.200l-2.800 2.800a2.900 2.900 0 0 1-4.100-4.100l2.300-2.300"/></g></g>
</defs><path d="M13.500 150l-4.500 3.300 4.500 3.300zM19 150l-4.500 3.300 4.500 3.300z" fill="#2a2a2a"/><circle cx="287.500" cy="153.300" r="4.300" fill="#1e1e1e"/><path d="M285 153.300h5" stroke="#f1f1f1" stroke-width="1.300"/><path d="M299.500 147.500v11.500M301.500 149v8.500" stroke="#555" stroke-width=".9"/><circle cx="287.500" cy="973" r="4.300" fill="#1e1e1e"/><path d="M285 973h5M287.500 970.500v5" stroke="#f1f1f1" stroke-width="1.300"/><path d="M299.500 967v11.500M301.500 968.500v8.500" stroke="#555" stroke-width=".9"/><use href="#iArrC" x="44" y="180"/><use href="#iGear" x="69" y="180"/><use href="#iArrC" x="44" y="204"/><use href="#iFolder" x="69" y="204"/><use href="#iArrO" x="44" y="228"/><use href="#iContact" x="69" y="228"/><use href="#iContact" x="87" y="252"/><use href="#iArrC" x="44" y="276"/><use href="#iEyeH" x="69" y="276"/><use href="#iFolder" x="94" y="276"/><use href="#iArrO" x="44" y="300"/><use href="#iEyeH" x="69" y="300"/><use href="#iFolder" x="94" y="300"/><use href="#iArrC" x="62" y="324"/><use href="#iEye" x="87" y="324"/><use href="#iJoint" x="112" y="324"/><use href="#iArrO" x="44" y="348"/><use href="#iEye" x="69" y="348"/><use href="#iFolder" x="94" y="348"/><use href="#iEye" x="87" y="372"/><use href="#iBody" x="112" y="372"/><use href="#iEye" x="87" y="396"/><use href="#iBody" x="112" y="396"/><use href="#iEye" x="87" y="420"/><use href="#iBody" x="112" y="420"/><use href="#iEye" x="87" y="444"/><use href="#iBody" x="112" y="444"/><use href="#iEye" x="87" y="468"/><use href="#iBody" x="112" y="468"/><use href="#iEye" x="87" y="492"/><use href="#iBody" x="112" y="492"/><use href="#iEye" x="87" y="516"/><use href="#iBody" x="112" y="516"/><use href="#iEye" x="87" y="540"/><use href="#iBody" x="112" y="540"/><use href="#iEye" x="87" y="564"/><use href="#iBody" x="112" y="564"/><use href="#iEye" x="87" y="588"/><use href="#iBody" x="112" y="588"/><use href="#iArrO" x="44" y="612"/><use href="#iEye" x="69" y="612"/><use href="#iFolder" x="94" y="612"/><use href="#iEyeH" x="87" y="636"/><use href="#iSketch" x="112" y="636"/><use href="#iEyeH" x="87" y="660"/><use href="#iSketch" x="112" y="660"/><use href="#iEyeH" x="87" y="684"/><use href="#iSketch" x="112" y="684"/><use href="#iEyeH" x="87" y="708"/><use href="#iSketch" x="112" y="708"/><use href="#iEyeH" x="87" y="732"/><use href="#iSketchL" x="112" y="732"/><use href="#iEyeH" x="87" y="756"/><use href="#iSketch" x="112" y="756"/><use href="#iEyeH" x="87" y="780"/><use href="#iSketch" x="112" y="780"/><use href="#iEyeH" x="87" y="804"/><use href="#iSketch" x="112" y="804"/><use href="#iEyeH" x="87" y="828"/><use href="#iSketch" x="112" y="828"/><use href="#iArrO" x="44" y="852"/><use href="#iEyeH" x="69" y="852"/><use href="#iFolder" x="94" y="852"/><use href="#iEyeH" x="87" y="876"/><use href="#iPlane" x="112" y="876"/><use href="#iEye" x="87" y="900"/><use href="#iPlane" x="112" y="900"/><use href="#iArrC" x="44" y="924"/><use href="#iEye" x="69" y="924"/><use href="#iComp" x="94" y="924"/><use href="#iLink" x="119" y="924"/></svg>
<div class="bt" style="left:28px;top:147px;color:#333">ブラウザ</div>
<div class="bt" style="left:28px;top:967px;color:#333">コメント</div>
</div>
<div id="timeline" class="abs"></div>
<div id="taskbar" class="abs"></div>
<svg class="abs" style="left:0;top:955px;overflow:visible" width="1920" height="125" viewBox="0 955 1920 125">
<defs>
<linearGradient id="tbF" x1="0" y1="0" x2="0" y2="1"><stop offset="0" stop-color="#74b9ec"/><stop offset="1" stop-color="#5fa9e2"/></linearGradient>
<g id="tS"><path d="M-6.500 -6.500H6.500V0M-6.500 -6.500V6.500H0" fill="none" stroke="#3a3a3a" stroke-width="1" stroke-dasharray="2.500 1.500"/><g fill="#2f8fe0"><rect x="-7.700" y="-7.700" width="2.400" height="2.400"/><rect x="5.300" y="-7.700" width="2.400" height="2.400"/><rect x="-7.700" y="5.300" width="2.400" height="2.400"/></g><path d="M1 8l1.200-3.200 5.300-5.300 2 2-5.300 5.300z" fill="#f2b24a"/><path d="M6.600 .4l1.700-1.500 1.900 1.900-1.600 1.600z" fill="#e4572e"/></g>
<g id="tE"><path d="M-8 5h10.500l3-3v2.800l-3 3h-10.500z" fill="#c3c3c3"/><path d="M-8 -5.500h10.500v10.500h-10.500z" fill="url(#tbF)"/><path d="M-8 -5.500l3-3h10.500l-3 3z" fill="#88c6f6"/><path d="M2.500 -5.500l3-3v10.500l-3 3z" fill="#4a94d2"/><path d="M8.500 6V-6.500" stroke="#222" stroke-width="1"/><path d="M6.900 -5l1.600-3.300 1.600 3.300z" fill="#222"/></g>
<g id="tD"><path d="M-8 7.500V-1l4-5.500h6.500l5.500 8.500v5.500z" fill="#e2e2e2" stroke="#5a5a5a" stroke-width="1"/><path d="M-3.500 -5.500l5.500-2 4.500 9-5.500 3.500z" fill="#5fa9e2"/><path d="M2 -7.500l2.500-.5 5 9.500-3 1z" fill="#3f7fb8"/></g>
<g id="tF"><path d="M-8.500 0l7-7.500h6c3 0 4.500 2 4.500 4.500v7l-3 3.500h-14.500z" fill="#e0e0e0" stroke="#5a5a5a" stroke-width="1"/><path d="M6 4l3-2.500v2.500l-3 3.500z" fill="#b5b5b5"/><path d="M-7 -1.500l5.500-6 6 4.500-5.500 6z" fill="#5fa9e2"/></g>
<g id="tH"><path d="M-8 -4.500h12.500v12h-12.500z" fill="#e6e6e6" stroke="#777" stroke-width=".9"/><path d="M-8 -4.500l3.500-3.300h12.500l-3.500 3.300z" fill="#f2f2f2" stroke="#777" stroke-width=".9"/><path d="M4.500 -4.500l3.500-3.300v12l-3.500 3.300z" fill="#c4c4c4" stroke="#777" stroke-width=".9"/><path d="M-6 -1.500h4v5h5v3h-9z" fill="#4a94d2"/><path d="M-2 -1.500h5v5h-5z" fill="#fff"/></g>
<g id="tO"><path d="M-8 2.500h12v5h-12z" fill="#dddddd" stroke="#8a8a8a" stroke-width=".8"/><path d="M4 2.500l3.500-3v5l-3.500 3z" fill="#b9b9b9"/><path d="M-8 -5h12v4.500h-12z" fill="url(#tbF)"/><path d="M-8 -5l3-3h12l-3 3z" fill="#88c6f6"/><path d="M4 -5l3-3v5l-3 2.500z" fill="#4a94d2"/><path d="M-9.500 1h14l4-3.500" fill="none" stroke="#3d9be0" stroke-width="1.200"/></g>
<g id="tC" fill="#f4f4f4" stroke="#3a3a3a" stroke-width="1"><path d="M-3.500 -7.500h11v11h-11z"/><path d="M-5.500 -5.500h11v11h-11z"/><path d="M-7.500 -3.500h11v11h-11z"/><path d="M-5 -1h6v6h-6z"/></g>
<g id="tM"><path d="M-1.500 -8V8H-8.500Z" fill="#f4f4f4" stroke="#5a5a5a" stroke-width="1"/><path d="M1 -8V8H8.500Z" fill="#4a9be0"/></g>
<g id="tP"><rect x="-12" y="-12" width="24" height="24" rx="2" fill="#e8e43a"/><path d="M-8 1h6v7h-6z" fill="none" stroke="#5a5a5a" stroke-width="1"/><path d="M-6.500 -1l6-7 7.500 5.500-6.500 7z" fill="#e8965f"/><path d="M-2 -4l2.500-3 3.500 2.500-2.500 3z" fill="#8fd18f"/></g>
<g id="tJ"><path d="M-8 -1c0-3.500 1.500-6 4-7l2.500-.5c1.500 0 2 .8 2 2v9l-5.500 6-3-1z" fill="#c9c9c9" stroke="#5a5a5a" stroke-width="1"/><path d="M1.500 0l2.500-1.500.5-5 2.500-1 2 4.500v10l-2 1.500-5.500-3.500z" fill="#c9c9c9" stroke="#5a5a5a" stroke-width="1"/><path d="M-3 0v4M3.500 -3v4" stroke="#2d8fdd" stroke-width="1"/></g>
<g id="tK"><path d="M-8.500 -2l5-5.500h3l-5 5.500v10h-3z" fill="#dcdcdc" stroke="#5a5a5a" stroke-width=".9"/><path d="M-4 -2l5-6v12l-5 5.500z" fill="#54c27a"/><path d="M2.500 -2.500l5-5v12.500l-5 5z" fill="#e8966a"/></g>
<g id="tL"><path d="M-8.500 -3.500l3.500-3.500h13v11l-3.500 3.500h-13z" fill="#d6d6d6" stroke="#6a6a6a" stroke-width="1"/><path d="M-8.500 -3.500h13v11M4.500 -3.500l3.500-3.500" fill="none" stroke="#6a6a6a" stroke-width=".9"/><g fill="none" stroke="#8a8a8a" stroke-width="1.600" stroke-linecap="round"><path d="M-2.800 1.800l2-2a2 2 0 0 1 3 3l-1.600 1.600"/><path d="M-.8 3.600l-2 2a2 2 0 0 1-3-3l1.600-1.600"/></g></g>
</defs>
<rect x="833" y="962" width="253" height="24" fill="#efefef" fill-opacity=".96"/>
<g stroke="#222" fill="none" stroke-width="1">
<path d="M844.500 966v15M842.800 968l1.700-2.600 1.700 2.600" stroke-width="1.200"/><path d="M843.300 967.500h2.400v13h-2.400z" fill="#fff" stroke-width=".8"/><path d="M838.500 973c0-2 12-2 12.500.5 0 2-6 3-11 2.500" stroke-width="1.300"/><path d="M841.500 974l-3 2 3.500 1.700" stroke-width="1.200"/>
<path d="M870 969.500h14.500v11.500h-14.500z" stroke-width="1.200"/><path d="M872.800 974.500h9v3.300h-9z" fill="#9ab" stroke-width=".9"/><path d="M871.500 969.500v-1.500l4-2 1 1.500 3.500-2v4" stroke-width="1"/>
<path d="M899.500 981.800c-.5-2-1.600-3.700-3.700-6.300-1-1.300.9-2.700 2.100-1.400l1.800 1.900v-6.600c0-1.500 2.100-1.500 2.100 0v-1.600c0-1.500 2.200-1.500 2.200 0v1.200c0-1.400 2.100-1.400 2.100 0v1.900c0-1.300 2-1.300 2 0v6.200c0 2.600-1 3.500-1.500 5.700z" fill="#fff" stroke-width=".9"/><path d="M901.800 969.500v5M904 968v6.500M906.100 969.200v5.300" stroke-width=".8"/>
<circle cx="926" cy="972.500" r="4.300" fill="#eef3f8" stroke-width="1.300"/><path d="M929.200 975.700l4 4" stroke-width="2.200" stroke="#333"/><path d="M933 967.500h4M935 965.500v4M933 971.500h4" stroke-width=".9"/>
<circle cx="953" cy="972.500" r="5.300" fill="#f4f4f4" stroke-width="1.400"/><rect x="950.500" y="970" width="5" height="5" fill="#fff" stroke-width=".8"/><path d="M957 976.500l4.500 4.500" stroke-width="2.400" stroke="#333"/>
<path d="M988.500 966.500h15v11h-15z" fill="#8fb3dc" stroke="#444" stroke-width="1.400"/><path d="M993 980.800h6M996 977.500v3" stroke="#666" stroke-width="1.200"/>
<path d="M1019.500 966.500h15v15h-15z" fill="#fff" stroke="#555" stroke-width="1"/><path d="M1023.250 966.500v15M1027 966.500v15M1030.750 966.500v15M1019.500 970.250h15M1019.500 974h15M1019.500 977.750h15" stroke="#666" stroke-width=".8"/>
<path d="M1050.500 967.500h13.500v12h-13.500z" fill="#8fb3dc" stroke="#3a5f99" stroke-width="1"/><path d="M1057.250 967.500v12M1050.500 973.500h13.500" stroke="#3a5f99" stroke-width="1.400"/><path d="M1052.500 969.500h3v2h-3zM1059 969.500h3v2h-3zM1052.500 975.500h3v2h-3zM1059 975.500h3v2h-3z" fill="#b9d0ea" stroke="none"/>
</g><g fill="#222"><path d="M857.300 972.300h5.200l-2.600 3.400z"/><path d="M968.300 972.300h5.200l-2.600 3.400z"/><path d="M1006.300 972.300h5.200l-2.600 3.400z"/><path d="M1038 972.300h5.200l-2.600 3.400z"/><path d="M1068.300 972.300h5.200l-2.600 3.400z"/></g>
</svg>
<svg class="abs" style="left:0;top:992px;overflow:visible" width="1920" height="48" viewBox="0 992 1920 48">
<g fill="#3a3a3a"><path d="M11.500 1009.500h1.800v13h-1.800zM22 1009.500v13l-8.500-6.500z"/><path d="M45 1009.500v13l-9-6.500z"/><path d="M46 1012.500h1.500v7h-1.500z" fill="#6a6a6a"/><path d="M60 1008.500v15l11.500-7.500z"/><path d="M87 1009.500v13l9-6.500z"/><path d="M84.500 1012.500h1.500v7h-1.500z" fill="#6a6a6a"/><path d="M111 1009.500v13l8.500-6.500zM120.200 1009.500h1.800v13h-1.800z"/></g>
<path d="M154.500 1031.500H1474.500M154.5 1026.300v5.200M178.5 1026.300v5.200M202.5 1026.300v5.200M226.5 1026.300v5.200M250.5 1026.300v5.200M274.5 1026.300v5.200M298.5 1026.300v5.200M322.5 1026.300v5.200M346.5 1026.300v5.200M370.5 1026.300v5.200M394.5 1026.300v5.200M418.5 1026.300v5.200M442.5 1026.300v5.200M466.5 1026.300v5.200M490.5 1026.300v5.200M514.5 1026.300v5.200M538.5 1026.300v5.200M562.5 1026.300v5.200M586.5 1026.300v5.200M610.5 1026.300v5.200M634.5 1026.300v5.200M658.5 1026.300v5.200M682.5 1026.300v5.200M706.5 1026.300v5.200M730.5 1026.300v5.200M754.5 1026.300v5.200M778.5 1026.300v5.200M802.5 1026.300v5.200M826.5 1026.300v5.200M850.5 1026.300v5.200M874.5 1026.300v5.200M898.5 1026.300v5.200M922.5 1026.300v5.200M946.5 1026.300v5.200M970.5 1026.300v5.200M994.5 1026.300v5.200M1018.5 1026.300v5.200M1042.5 1026.300v5.200M1066.5 1026.300v5.200M1090.5 1026.300v5.200M1114.5 1026.300v5.200M1138.5 1026.300v5.200M1162.5 1026.300v5.200M1186.5 1026.300v5.200M1210.5 1026.300v5.200M1234.5 1026.300v5.200M1258.5 1026.300v5.200M1282.5 1026.300v5.200M1306.5 1026.300v5.200M1330.5 1026.300v5.200M1354.5 1026.300v5.200M1378.5 1026.300v5.200M1402.5 1026.300v5.200M1426.5 1026.300v5.200M1450.5 1026.300v5.200M1474.5 1026.300v5.200" stroke="#cdcdcd" stroke-width="1.400" fill="none"/>
<use href="#tL" x="154" y="1015.200"/>
<use href="#tS" x="178" y="1015.200"/>
<use href="#tE" x="202" y="1015.200"/>
<use href="#tD" x="226" y="1015.200"/>
<use href="#tF" x="250" y="1015.200"/>
<use href="#tF" x="274" y="1015.200"/>
<use href="#tF" x="298" y="1015.200"/>
<use href="#tH" x="322" y="1015.200"/>
<use href="#tH" x="346" y="1015.200"/>
<use href="#tH" x="370" y="1015.200"/>
<use href="#tO" x="394" y="1015.200"/>
<use href="#tE" x="418" y="1015.200"/>
<use href="#tE" x="442" y="1015.200"/>
<use href="#tE" x="466" y="1015.200"/>
<use href="#tC" x="490" y="1015.200"/>
<use href="#tD" x="514" y="1015.200"/>
<use href="#tD" x="538" y="1015.200"/>
<use href="#tD" x="562" y="1015.200"/>
<use href="#tD" x="586" y="1015.200"/>
<use href="#tD" x="610" y="1015.200"/>
<use href="#tS" x="634" y="1015.200"/>
<use href="#tE" x="658" y="1015.200"/>
<use href="#tD" x="682" y="1015.200"/>
<use href="#tM" x="706" y="1015.200"/>
<use href="#tM" x="730" y="1015.200"/>
<use href="#tP" x="754" y="1015.200"/>
<use href="#tS" x="778" y="1015.200"/>
<use href="#tE" x="802" y="1015.200"/>
<use href="#tD" x="826" y="1015.200"/>
<use href="#tD" x="850" y="1015.200"/>
<use href="#tJ" x="874" y="1015.200"/>
<use href="#tS" x="898" y="1015.200"/>
<use href="#tE" x="922" y="1015.200"/>
<use href="#tD" x="946" y="1015.200"/>
<use href="#tD" x="970" y="1015.200"/>
<use href="#tS" x="994" y="1015.200"/>
<use href="#tE" x="1018" y="1015.200"/>
<use href="#tS" x="1042" y="1015.200"/>
<use href="#tE" x="1066" y="1015.200"/>
<use href="#tF" x="1090" y="1015.200"/>
<use href="#tF" x="1114" y="1015.200"/>
<use href="#tF" x="1138" y="1015.200"/>
<use href="#tS" x="1162" y="1015.200"/>
<use href="#tS" x="1186" y="1015.200"/>
<use href="#tE" x="1210" y="1015.200"/>
<use href="#tE" x="1234" y="1015.200"/>
<use href="#tS" x="1258" y="1015.200"/>
<use href="#tE" x="1282" y="1015.200"/>
<use href="#tC" x="1306" y="1015.200"/>
<use href="#tE" x="1330" y="1015.200"/>
<use href="#tE" x="1354" y="1015.200"/>
<use href="#tC" x="1378" y="1015.200"/>
<use href="#tC" x="1402" y="1015.200"/>
<use href="#tE" x="1426" y="1015.200"/>
<use href="#tK" x="1450" y="1015.200"/>
<use href="#tM" x="1474" y="1015.200"/>
<path d="M1480 1002h12.500l-5.500 6.200v23h-1.500v-23z" fill="#555"/>
<g transform="translate(1899 1016)"><circle r="4.800" fill="none" stroke="#8a8a8a" stroke-width="3.200"/><g stroke="#8a8a8a" stroke-width="2.800"><path d="M0 -7.300V7.300M-7.300 0H7.300M-5.200 -5.200L5.200 5.200M-5.200 5.200L5.200 -5.200"/></g><circle r="2.600" fill="#f0f0f0"/></g>
</svg>
<div class="abs" style="left:48px;top:1041px;width:343px;height:39px;background:#f2f2f2"></div>
<div class="abs" style="left:687px;top:1040px;width:48px;height:40px;background:rgba(255,255,255,.16)"></div>
<div class="abs" style="left:687px;top:1078px;width:48px;height:2px;background:#76b9ed"></div><div class="abs" style="left:740px;top:1078px;width:40px;height:2px;background:#76b9ed"></div><div class="abs" style="left:789px;top:1078px;width:40px;height:2px;background:#76b9ed"></div>
<svg class="abs" style="left:0;top:1040px;overflow:visible" width="1920" height="40" viewBox="0 1040 1920 40">
<g fill="#fff"><path d="M16 1053.200l7-1v7.300h-7zM24 1052l9-1.300v8.800h-9zM16 1060.500h7v7.300l-7-1zM24 1060.500h9v8.800l-9-1.300z"/></g>
<circle cx="70.500" cy="1057" r="5" fill="none" stroke="#222" stroke-width="1.400"/><path d="M67 1061l-6 6.500" stroke="#222" stroke-width="1.500"/>
<circle cx="416" cy="1060" r="7" fill="none" stroke="#fff" stroke-width="2"/>
<g fill="none" stroke="#fff" stroke-width="1.200"><path d="M457.500 1055.500h9v9h-9zM456 1052.500h11.500M456 1067.500h11.500"/><path d="M470 1056v3M470 1061.500v3.500M470.500 1052.500v1M470.500 1067v1" stroke-width="1.800"/></g>
<path d="M504 1051h7l2 2.500h12.500v3h-21.500z" fill="#e8a317"/><path d="M504 1054.500h21.500v14.500h-21.500z" fill="#fbc740"/><path d="M508 1061.500h13.500v7.500h-13.500z" fill="#3d9be9"/><path d="M511.500 1065h6.500v4h-6.500z" fill="#fbc740"/>
<circle cx="564" cy="1060" r="11" fill="#de4436"/><path d="M564 1060l-9.500-5.500a11 11 0 0 0 4 15z" fill="#2da94f"/><path d="M564 1060l-5.500 9.500a11 11 0 0 0 15-4l1.500-5.500z" fill="#fdc41c"/><path d="M564 1060h11a11 11 0 0 0-1.500-5.500h-9.500z" fill="#de4436"/><circle cx="564" cy="1060" r="5" fill="#fff"/><circle cx="564" cy="1060" r="3.900" fill="#4a8af4"/>
<rect x="601" y="1048" width="24" height="24" fill="#0a0a3a"/><rect x="601" y="1048" width="8" height="24" fill="#1a1aaa"/><rect x="601" y="1048" width="2" height="24" fill="#d02020"/><rect x="618" y="1048" width="7" height="24" fill="#050510"/>
<g transform="translate(662 1060) rotate(-35)"><rect x="-12" y="-4.500" width="22" height="9" rx="1.500" fill="#2248c8" stroke="#9db4f0" stroke-width="1"/><rect x="-6" y="-2" width="10" height="4" fill="#e9eefc"/><circle cx="12.500" cy="0" r="2.300" fill="none" stroke="#9db4f0" stroke-width="1.200"/></g>
<rect x="699" y="1048" width="24" height="24" fill="#f6d3b0"/><path d="M705 1052h12.500v4h-8v4h6.500v3.800h-6.500v6.500h-4.500z" fill="#e07a1f"/><path d="M705 1052h3v18.300h-3z" fill="#f29a3e"/>
<g transform="translate(759.500 1060)"><circle r="6" fill="none" stroke="#fff" stroke-width="3"/><g stroke="#fff" stroke-width="3.400"><path d="M0 -9.300V9.300M-9.300 0H9.300M-6.600 -6.600L6.600 6.600M-6.600 6.600L6.600 -6.600"/></g><circle r="3.900" fill="#1e3040"/><circle r="6" fill="none" stroke="#fff" stroke-width="2.600"/></g>
<path d="M797 1063c0-7 6-11.500 12-11.500 6.500 0 10.500 4 10.500 8 0 3-2.500 4.500-5.500 4-2.500-.5-4 1-3 3 1 2-.5 4.500-4 4.500-5.500 0-10-3.500-10-8z" fill="#d9dde3" stroke="#8a98a8" stroke-width=".8"/><circle cx="802.500" cy="1061" r="1.900" fill="#2f8fdf"/><circle cx="806" cy="1056" r="1.900" fill="#e04a3a"/><circle cx="811.500" cy="1055" r="1.900" fill="#f0c030"/><circle cx="803.500" cy="1066.500" r="1.900" fill="#3aa860"/><path d="M808 1071l9.500-19 1.800.8-8.800 19.200z" fill="#c98a4a"/><path d="M817.300 1052.300l1.700-3.300 1.300 4z" fill="#e8d0a0"/>
<g fill="none" stroke="#fff" stroke-width="1.300"><path d="M1648.500 1063.500l5.500-5.500 5.500 5.500"/><path d="M1673 1055.500h12.500v8.500h-12.500zM1679 1064v3M1675.500 1067.500h8"/><path d="M1671.500 1054.500h4v3.500h-4z" fill="#1b2a42" stroke-width="1"/><path d="M1719.500 1057.500h2.500l3.500-3v11l-3.500-3h-2.500z" stroke-width="1.100"/><path d="M1728 1056.500c1.300 1 1.300 6 0 7M1730.500 1054.500c2.300 2 2.300 9 0 11" stroke-width="1" opacity=".8"/></g>
<path d="M1696 1064.500c-2.500 0-3.200-3.200-.8-4 0-3 3.800-4 5.300-1.800 2-1.400 4.800 0 4.600 2.200 2.600.2 2.600 3.600 0 3.600z" fill="#e9e9e9"/>
<circle cx="1750" cy="1060" r="6.500" fill="#9a9a9a"/><path d="M1747.300 1057.300l5.400 5.400M1752.700 1057.300l-5.400 5.400" stroke="#1b2a42" stroke-width="1.500"/>
<rect x="1772.500" y="1053.500" width="13" height="13" fill="#fff"/><circle cx="1779" cy="1060" r="5.600" fill="#111"/><path d="M1780.300 1056.500v5c0 1.500-1 2.300-2.500 2" fill="none" stroke="#fff" stroke-width="1.300"/>
<path d="M1879.500 1052.500h15v11h-10l-2.500 3v-3h-2.500z" fill="#fff"/><path d="M1882 1055.500h10M1882 1058h10M1882 1060.500h6" stroke="#1b2541" stroke-width=".9"/><circle cx="1894" cy="1067.500" r="6" fill="#2a3148" stroke="#d0d0d0" stroke-width="1"/>
</svg>
<div class="t" style="left:88px;top:1053px;font-size:14px;color:#3a3a3a">ここに入力して検索</div>
<div class="t" style="left:603px;top:1053px;font-size:13px;color:#fff;font-family:'Liberation Serif',serif;letter-spacing:-.5px">ViX</div>
<div class="t" style="left:1817px;top:1045px;font-size:12px;color:#fff;letter-spacing:-.2px">12:44</div>
<div class="t" style="left:1803px;top:1063px;font-size:12px;color:#fff;letter-spacing:-.2px">2020/09/13</div>
<div class="t" style="left:1891.500px;top:1062.500px;font-size:9px;color:#fff">1</div>
</div></body></html>
